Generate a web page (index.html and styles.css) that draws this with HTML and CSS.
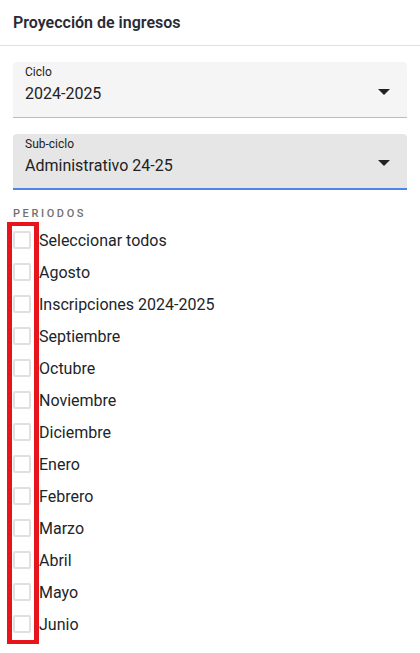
FILE: index.html
```html
<!DOCTYPE html>
<html lang="es">
<head>
  <meta charset="UTF-8">
  <meta name="viewport" content="width=device-width, initial-scale=1.0">
  <title>Proyección de ingresos</title>
  <link rel="stylesheet" href="styles.css">
</head>
<body>
  <div class="panel">
    <div class="panel-header">Proyección de ingresos</div>

    <div class="panel-body">
      <div class="select-field">
        <div class="select-text">
          <span class="select-label">Ciclo</span>
          <span class="select-value">2024-2025</span>
        </div>
        <span class="select-arrow"></span>
      </div>

      <div class="select-field focused">
        <div class="select-text">
          <span class="select-label">Sub-ciclo</span>
          <span class="select-value">Administrativo 24-25</span>
        </div>
        <span class="select-arrow"></span>
      </div>

      <div class="section-title">PERIODOS</div>

      <div class="period-list">
        <div class="highlight"></div>
        <label class="period"><span class="check"></span>Seleccionar todos</label>
        <label class="period"><span class="check"></span>Agosto</label>
        <label class="period"><span class="check"></span>Inscripciones 2024-2025</label>
        <label class="period"><span class="check"></span>Septiembre</label>
        <label class="period"><span class="check"></span>Octubre</label>
        <label class="period"><span class="check"></span>Noviembre</label>
        <label class="period"><span class="check"></span>Diciembre</label>
        <label class="period"><span class="check"></span>Enero</label>
        <label class="period"><span class="check"></span>Febrero</label>
        <label class="period"><span class="check"></span>Marzo</label>
        <label class="period"><span class="check"></span>Abril</label>
        <label class="period"><span class="check"></span>Mayo</label>
        <label class="period"><span class="check"></span>Junio</label>
      </div>
    </div>
  </div>
</body>
</html>
```

FILE: styles.css
```css
body {
  margin: 0;
  font-family: Roboto, "Liberation Sans", Arial, sans-serif;
  background-color: #fff;
  color: #212529;
}
.panel-header {
  height: 46px;
  box-sizing: border-box;
  padding: 0 13px;
  display: flex;
  align-items: center;
  font-size: 16px;
  font-weight: 600;
  color: #2a2a35;
  border-bottom: 1px solid #e0e0e0;
}
.panel-body {
  padding: 16px 13px 8px;
}
.select-field {
  height: 56px;
  box-sizing: border-box;
  background-color: #f5f5f5;
  border-radius: 4px 4px 0 0;
  border-bottom: 1px solid #bcbcbc;
  padding: 0 12px;
  display: flex;
  align-items: center;
  margin-bottom: 16px;
}
.select-field.focused {
  background-color: #e6e6e6;
  border-bottom: 2px solid #4a86e8;
  margin-bottom: 0;
}
.select-text {
  flex: 1;
  align-self: flex-start;
  display: flex;
  flex-direction: column;
  padding-top: 2px;
}
.select-label {
  font-size: 12px;
  color: #222;
  line-height: 16px;
}
.select-value {
  font-size: 16px;
  color: #222;
  line-height: 28px;
}
.select-arrow {
  width: 0;
  height: 0;
  border-left: 6px solid transparent;
  border-right: 6px solid transparent;
  border-top: 6px solid #222;
  margin-right: 5px;
  margin-top: 4px;
}
.section-title {
  margin-top: 17px;
  font-size: 11px;
  font-weight: 500;
  letter-spacing: 2.6px;
  color: #707070;
  line-height: 14px;
}
.period-list {
  position: relative;
  margin-top: 3px;
}
.period {
  height: 32px;
  display: flex;
  align-items: center;
  font-size: 16px;
  color: #212529;
}
.check {
  width: 18px;
  height: 18px;
  box-sizing: border-box;
  border: 2px solid #e0e0e0;
  border-radius: 2px;
  margin-right: 8px;
}
.highlight {
  position: absolute;
  left: -6px;
  top: -2px;
  width: 32px;
  height: 422px;
  box-sizing: border-box;
  border: solid #e8141c;
  border-width: 4px 5px;
}
```
